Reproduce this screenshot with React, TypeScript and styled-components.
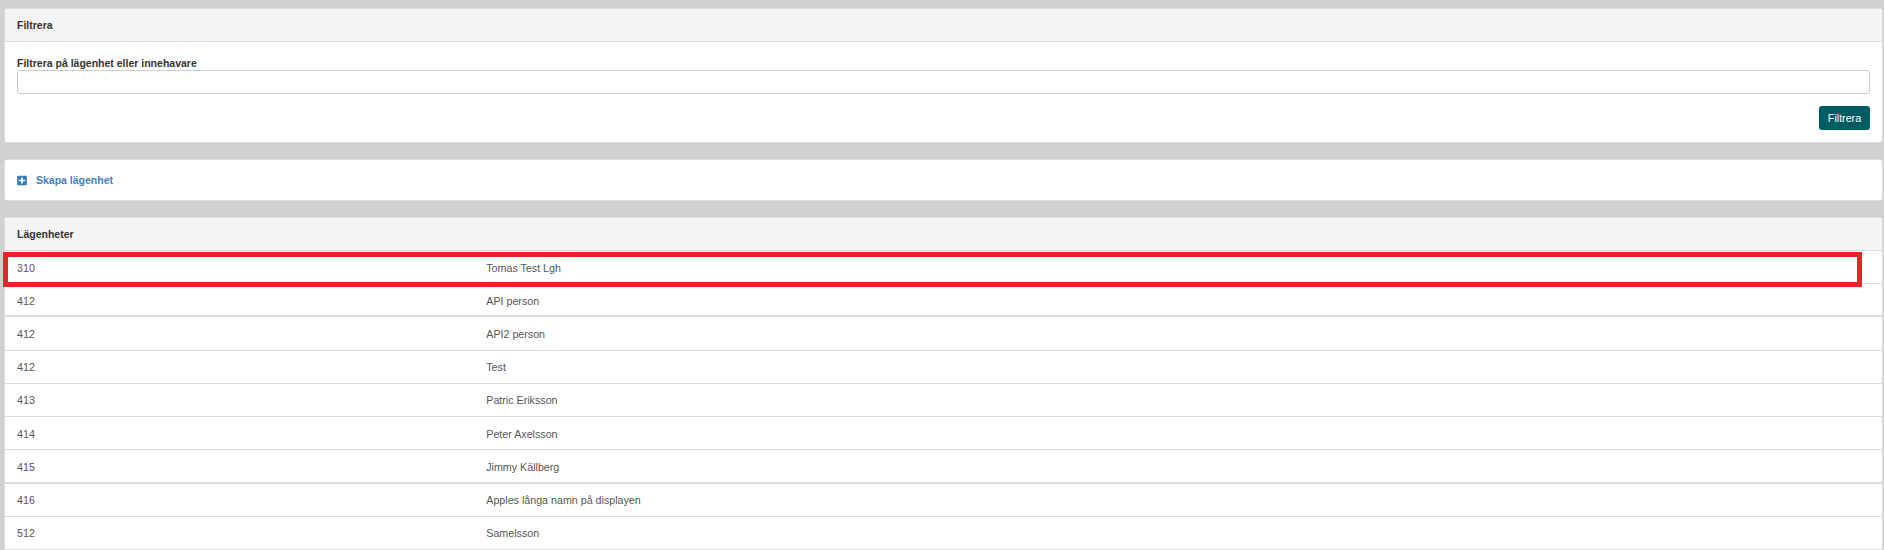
import React from "react";
import styled, { createGlobalStyle } from "styled-components";
import { FaPlusSquare } from "react-icons/fa";

const apartments = [
  { number: "310", name: "Tomas Test Lgh" },
  { number: "412", name: "API person", thick: true },
  { number: "412", name: "API2 person" },
  { number: "412", name: "Test" },
  { number: "413", name: "Patric Eriksson" },
  { number: "414", name: "Peter Axelsson" },
  { number: "415", name: "Jimmy Källberg", thick: true },
  { number: "416", name: "Apples långa namn på displayen" },
  { number: "512", name: "Samelsson" },
];

const GlobalStyle = createGlobalStyle`
  html, body {
    margin: 0;
    height: 550px;
    overflow: hidden;
    background: #d1d1d1;
    font-family: "Liberation Sans", Arial, sans-serif;
    font-size: 10.7px;
    color: #555;
  }
`;

const Page = styled.div`
  display: flex;
  flex-direction: column;
  gap: 16px;
  padding: 8px 1px 0 4px;
`;

const Panel = styled.section`
  background: #fff;
  border: 1px solid #dcdcdc;
  border-radius: 3px;
`;

const PanelHeader = styled.h2`
  margin: 0;
  height: 32px;
  padding: 0 12px;
  display: flex;
  align-items: center;
  background: #f4f4f4;
  border-bottom: 1px solid #dcdcdc;
  font-size: 10.5px;
  font-weight: bold;
  color: #333;
`;

const FilterBody = styled.form`
  height: 100px;
  box-sizing: border-box;
  padding: 14px 12px 0;
  display: flex;
  flex-direction: column;
`;

const Label = styled.label`
  font-size: 10.5px;
  font-weight: bold;
  color: #333;
  line-height: 14px;
`;

const TextInput = styled.input`
  box-sizing: border-box;
  height: 24px;
  border: 1px solid #ccc;
  border-radius: 3px;
  background: #fff;
  outline: 0;
`;

const Actions = styled.div`
  display: flex;
  justify-content: flex-end;
  margin-top: 12px;
`;

const Button = styled.button`
  width: 51px;
  height: 24px;
  padding: 0;
  border: 0;
  border-radius: 3px;
  background: #005c63;
  color: #fff;
  font: 10.7px "Liberation Sans", Arial, sans-serif;
`;

const CreateRow = styled.div`
  height: 40px;
  box-sizing: border-box;
  padding: 0 12px;
  display: flex;
  align-items: center;
  gap: 9px;
`;

const CreateLink = styled.a`
  color: #3f82bd;
  font-size: 10.5px;
  font-weight: bold;
  text-decoration: none;
`;

const PlusIcon = styled(FaPlusSquare)`
  width: 10px;
  height: 11px;
  color: #337ab7;
`;

const List = styled.div`
  position: relative;
`;

const Row = styled.div<{ $thick?: boolean }>`
  display: grid;
  grid-template-columns: 25% 75%;
  align-items: center;
  height: 33.22px;
  box-sizing: border-box;
  padding-top: ${(p) => (p.$thick ? "2px" : "1px")};
  border-bottom: ${(p) => (p.$thick ? "2px" : "1px")} solid #dcdcdc;
`;

const Cell = styled.div`
  padding: 0 12px;
`;

const Highlight = styled.div`
  position: absolute;
  left: -2px;
  top: 1px;
  width: 1859px;
  height: 35px;
  box-sizing: border-box;
  border: 5px solid #ed2129;
  pointer-events: none;
`;

export default function App() {
  return (
    <>
      <GlobalStyle />
      <Page>
        <Panel>
          <PanelHeader>Filtrera</PanelHeader>
          <FilterBody onSubmit={(e) => e.preventDefault()}>
            <Label htmlFor="filter">Filtrera på lägenhet eller innehavare</Label>
            <TextInput id="filter" type="text" />
            <Actions>
              <Button type="submit">Filtrera</Button>
            </Actions>
          </FilterBody>
        </Panel>
        <Panel>
          <CreateRow>
            <PlusIcon />
            <CreateLink href="#">Skapa lägenhet</CreateLink>
          </CreateRow>
        </Panel>
        <Panel>
          <PanelHeader>Lägenheter</PanelHeader>
          <List>
            {apartments.map((a, i) => (
              <Row key={i} $thick={a.thick}>
                <Cell>{a.number}</Cell>
                <Cell>{a.name}</Cell>
              </Row>
            ))}
            <Highlight />
          </List>
        </Panel>
      </Page>
    </>
  );
}
